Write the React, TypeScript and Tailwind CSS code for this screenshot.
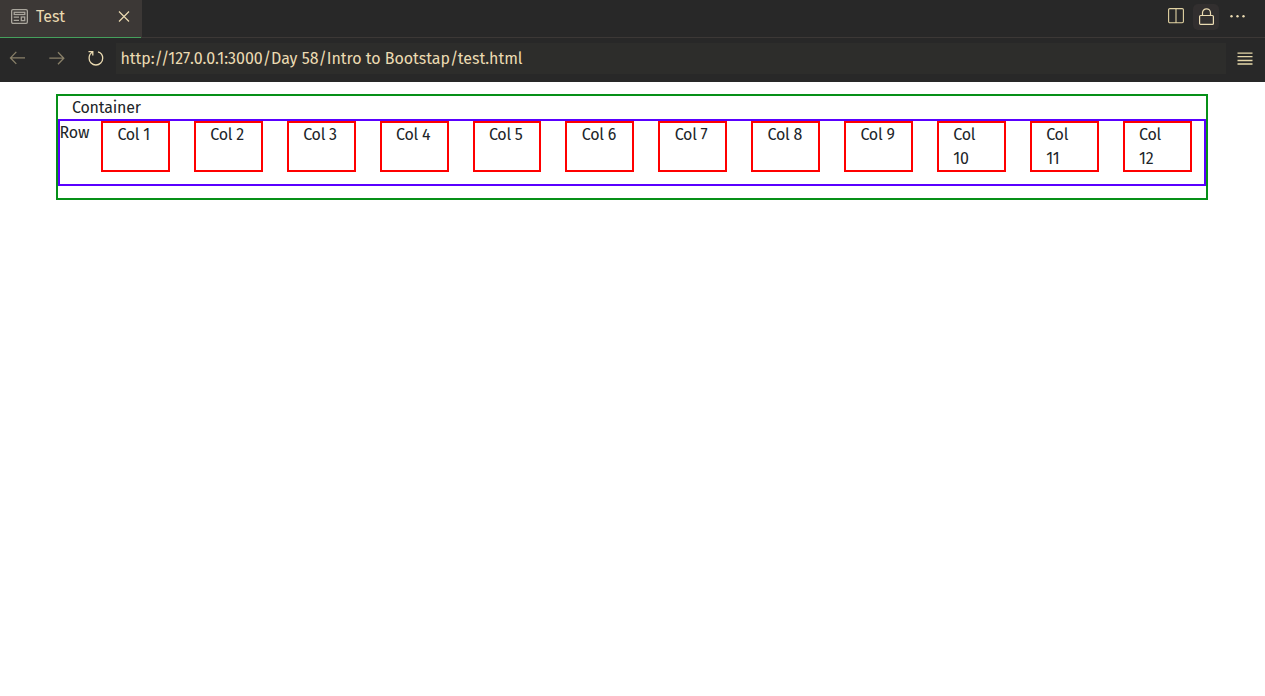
import React from "react";

const columns = Array.from({ length: 12 }, (_, i) => i + 1);

function PreviewIcon() {
  return (
    <svg width="17" height="15" viewBox="0 0 17 15" fill="none" stroke="#aaa69d" strokeWidth="1.3">
      <rect x="0.65" y="0.65" width="15.7" height="13.7" rx="1.3" />
      <rect x="3.2" y="3.3" width="10.6" height="2.2" />
      <path d="M2.7 8.2H8M2.7 11.3H8" />
      <rect x="10.3" y="8" width="3.4" height="3.6" />
    </svg>
  );
}

function TabBar() {
  return (
    <div className="flex h-[38px] border-b border-[#3c3836] text-[#ebdbb2]">
      <div className="h-[38px] w-[142px] shrink-0 bg-[#3c3836]">
        <div className="flex h-[38px] w-[141px] border-b border-[#45a05c] pt-[9px] pl-[11px]">
          <PreviewIcon />
          <span className="ml-2 w-[82px] text-[16px] leading-[16px] tracking-[-0.1px]">Test</span>
          <svg className="mt-px" width="12" height="12" viewBox="0 0 12 12" stroke="#ebdbb2" strokeWidth="1.2">
            <path d="M1 1.5L11 11.5M11 1.5L1 11.5" />
          </svg>
        </div>
      </div>
      <div className="ml-auto flex h-[34px] items-start pr-5">
        <svg className="mt-2 mr-[9px]" width="16" height="16" viewBox="0 0 16 16" fill="none" stroke="#e2d3a3" strokeWidth="1.1">
          <rect x="0.6" y="0.6" width="14.8" height="14.2" rx="1.2" />
          <path d="M8 1V15" />
        </svg>
        <div className="mt-1 flex h-[26px] w-[26px] justify-center rounded-[5px] bg-[#322f2f] pt-1">
          <svg width="16" height="18" viewBox="0 0 16 18" fill="none" stroke="#ebdbb2" strokeWidth="1.2">
            <rect x="1.6" y="7.5" width="13.8" height="8.9" rx="1" />
            <path d="M4.5 7.5V4.8a4 4 0 0 1 8 0V7.5" />
          </svg>
        </div>
        <svg className="mt-[14px] ml-[11px]" width="15" height="4" viewBox="0 0 15 4" fill="#ebdbb2">
          <circle cx="1.5" cy="2.3" r="1.2" />
          <circle cx="7.5" cy="2.3" r="1.2" />
          <circle cx="13.5" cy="2.3" r="1.2" />
        </svg>
      </div>
    </div>
  );
}

function AddressBar() {
  return (
    <div className="flex h-11 items-start pt-[5px] pl-[9px]">
      <svg className="mt-2 mr-6" width="16" height="15" viewBox="0 0 16 15" fill="none" stroke="#898069" strokeWidth="1.3">
        <path d="M16 6.9H1.7M7.3 0.9L1.5 6.9L7.3 12.9" />
      </svg>
      <svg className="mt-2 mr-[23px]" width="16" height="15" viewBox="0 0 16 15" fill="none" stroke="#898069" strokeWidth="1.3">
        <path d="M0.3 7.2H14.6M9 1.2L14.8 7.2L9 13.2" />
      </svg>
      <svg className="mt-[7px] mr-3" width="16" height="16" viewBox="0 0 16 16" fill="none" stroke="#ebdbb2" strokeWidth="1.3">
        <path d="M0.5 1.6H4.8V5.4M4.6 2C2.2 3.2 1.1 5.6 1.1 8.2a6.8 6.8 0 0 0 13.6 0c0-3.4-2.1-5.7-4.7-6.4" />
      </svg>
      <div className="h-[31px] w-[1110px] bg-[#2d2d2b] pl-[4.5px] text-[16px] leading-[31px] tracking-[-0.03px] whitespace-nowrap text-[#ebdbb2]">
        http://127.0.0.1:3000/Day 58/Intro to Bootstap/test.html
      </div>
      <svg className="mt-[9px] ml-[11px]" width="16" height="14" viewBox="0 0 16 14" stroke="#e5d7a9" strokeWidth="1.3">
        <path d="M0.5 1.2H15.5M0.5 4.7H15.5M0.5 8.5H15.5M0.5 12H15.5" />
      </svg>
    </div>
  );
}

export default function App() {
  return (
    <div className="min-h-screen bg-white font-['Fira_Sans','Noto_Sans',sans-serif]">
      <header className="h-[82px] bg-[#282828]">
        <TabBar />
        <AddressBar />
      </header>
      <main className="pt-3 pl-14 text-[16px] leading-6 text-[#212529]">
        <section className="h-[106px] w-[1152px] border-2 border-[#069018]">
          <div className="h-[23px] pl-[14px] tracking-[-0.2px]">Container</div>
          <div className="flex h-[67px] border-2 border-[#5a00ff]">
            <div className="w-[41px] shrink-0 leading-[23px] tracking-[-0.2px]"><span className="-ml-[0.5px]">Row</span></div>
            <div className="grid w-[1090.6px] shrink-0 grid-cols-12 items-start gap-6">
              {columns.map((n) => (
                <div key={n} className="h-[51px] border-2 border-[#ff0000] pl-[14.4px] tracking-[-0.25px]">
                  {n < 10 ? <span className="whitespace-nowrap">Col {n}</span> : <>Col<br />{n}</>}
                </div>
              ))}
            </div>
          </div>
        </section>
      </main>
    </div>
  );
}
